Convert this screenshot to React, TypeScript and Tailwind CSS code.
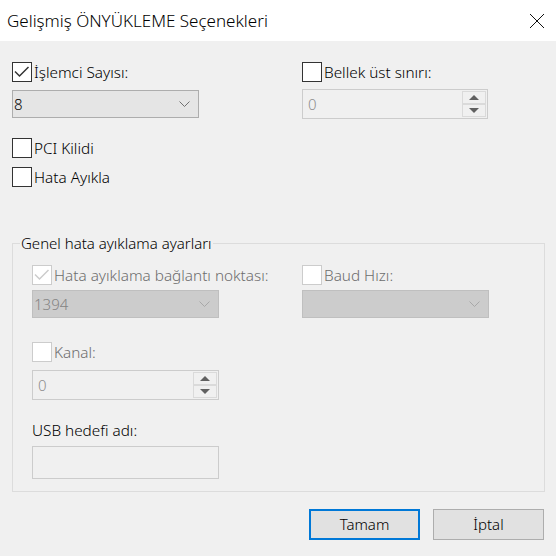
import React from "react";

const Check = ({ on, disabled }: { on?: boolean; disabled?: boolean }) => (
  <span
    className={`flex h-[20px] w-[20px] shrink-0 items-center justify-center border bg-white ${
      disabled ? "border-[#cccccc]" : "border-[#333333]"
    }`}
  >
    {on && (
      <svg width="18" height="18" viewBox="0 0 18 18">
        <polyline
          points="2,8.5 6.5,13 15.5,4"
          fill="none"
          stroke={disabled ? "#cccccc" : "#333333"}
          strokeWidth="1.5"
        />
      </svg>
    )}
  </span>
);

const CheckRow = ({
  label,
  on,
  disabled,
}: {
  label: string;
  on?: boolean;
  disabled?: boolean;
}) => (
  <div className="flex h-[20px] items-center">
    <Check on={on} disabled={disabled} />
    <span
      className={`ml-[2px] whitespace-nowrap text-[15.3px] leading-[20px] ${
        disabled ? "text-[#6d6d6d]" : "text-black"
      }`}
    >
      {label}
    </span>
  </div>
);

const Chevron = ({ color }: { color: string }) => (
  <svg width="11" height="6" viewBox="0 0 11 6">
    <polyline points="0.5,0.5 5.5,5.5 10.5,0.5" fill="none" stroke={color} strokeWidth="1" />
  </svg>
);

const Select = ({ value, disabled }: { value: string; disabled?: boolean }) => (
  <div
    className={`flex h-[28px] w-full items-center justify-between border pl-[1px] pr-[8px] text-[15px] ${
      disabled
        ? "border-[#bfbfbf] bg-[#cccccc] text-[#838383]"
        : "border-[#adadad] bg-[#e5e5e5] text-black"
    }`}
  >
    <span>{value}</span>
    <Chevron color={disabled ? "#a8a8a8" : "#707070"} />
  </div>
);

const Arrow = ({ up }: { up?: boolean }) => (
  <svg width="10" height="5" viewBox="0 0 10 5">
    <polygon points={up ? "0,5 5,0 10,5" : "0,0 5,5 10,0"} fill="#606060" />
  </svg>
);

const Spinner = ({ value }: { value: string }) => (
  <div className="flex h-[30px] w-full items-center border border-[#cccccc] bg-[#f0f0f0]">
    <span className="flex-1 pl-[5px] text-[15px] text-[#8d8d8d]">{value}</span>
    <div className="mr-[1px] flex h-full w-[24px] flex-col justify-between py-[1px]">
      <div className="flex h-[13px] items-center justify-center border border-[#dadada]">
        <Arrow up />
      </div>
      <div className="flex h-[13px] items-center justify-center border border-[#dadada]">
        <Arrow />
      </div>
    </div>
  </div>
);

export default function App() {
  return (
    <div className="h-[556px] w-[556px] overflow-hidden bg-[#f0f0f0] font-['Noto_Sans',sans-serif] font-light">
      <div className="flex h-[41px] items-center justify-between bg-white pl-[7px] pr-[11px]">
        <span className="text-[17px] text-black">Gelişmiş ÖNYÜKLEME Seçenekleri</span>
        <svg width="16" height="16" viewBox="0 0 16 16">
          <path d="M1 1 L15 15 M15 1 L1 15" stroke="#111" strokeWidth="1" />
        </svg>
      </div>

      <div className="px-[12px]">
        <div className="mt-[21px] flex items-start">
          <div className="w-[187px]">
            <CheckRow label="İşlemci Sayısı:" on />
            <div className="mt-[8px]">
              <Select value="8" />
            </div>
          </div>
          <div className="ml-[103px] w-[186px]">
            <CheckRow label="Bellek üst sınırı:" />
            <div className="mt-[7px]">
              <Spinner value="0" />
            </div>
          </div>
        </div>

        <div className="mt-[19px]">
          <CheckRow label="PCI Kilidi" />
        </div>
        <div className="mt-[9px]">
          <CheckRow label="Hata Ayıkla" />
        </div>

        <fieldset className="mt-[46px] w-[533px] border border-[#dcdcdc] pb-[12px]">
          <legend className="ml-[7px] px-[1px] text-[15px] leading-[20px] text-black">
            Genel hata ayıklama ayarları
          </legend>
          <div className="mt-[12px] flex items-start px-[19px]">
            <div className="w-[187px]">
              <CheckRow label="Hata ayıklama bağlantı noktası:" on disabled />
              <div className="mt-[5px]">
                <Select value="1394" disabled />
              </div>
              <div className="mt-[24px]">
                <CheckRow label="Kanal:" disabled />
              </div>
              <div className="mt-[8px]">
                <Spinner value="0" />
              </div>
              <div className="mt-[20px] text-[15.3px] leading-[20px] text-black">USB hedefi adı:</div>
              <div className="mt-[6px] h-[33px] border border-[#cccccc] bg-[#f0f0f0]" />
            </div>
            <div className="ml-[83px] w-[187px]">
              <CheckRow label="Baud Hızı:" disabled />
              <div className="mt-[5px]">
                <Select value="" disabled />
              </div>
            </div>
          </div>
        </fieldset>

        <div className="mt-[17px] flex justify-end gap-[13px]">
          <button className="h-[31px] w-[111px] border-2 border-[#0078d7] bg-[#e1e1e1] text-[15px] text-black">
            Tamam
          </button>
          <button className="h-[31px] w-[111px] border border-[#adadad] bg-[#e1e1e1] text-[15px] text-black">
            İptal
          </button>
        </div>
      </div>
    </div>
  );
}
